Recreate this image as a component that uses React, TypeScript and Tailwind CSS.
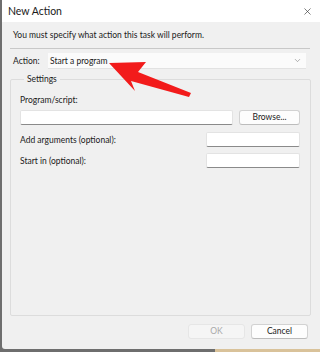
import { X, ChevronDown } from "lucide-react"

const font = { fontFamily: 'Lato, "Noto Sans", sans-serif' }

function Field({ className = "" }: { className?: string }) {
  return (
    <div className={"h-[15px] bg-white border border-[#e3e3e3] border-b-[#8a8a8a] rounded-[2px] " + className} />
  )
}

function Btn({ label, disabled, className = "" }: { label: string; disabled?: boolean; className?: string }) {
  return (
    <div
      className={
        "h-[15px] flex items-center justify-center rounded-[3px] border text-[8.5px] leading-none " +
        (disabled
          ? "bg-[#f5f5f5] border-[#e6e6e6] text-[#a9a9a9] "
          : "bg-[#fdfdfd] border-[#d2d2d2] border-b-[#bcbcbc] text-[#1b1b1b] ") +
        className
      }
    >
      {label}
    </div>
  )
}

export default function App() {
  return (
    <div className="relative w-[320px] h-[352px] bg-[#6e6e6e] flex flex-col overflow-hidden" style={font}>
      <div className="ml-[2px] h-[349px] shrink-0 flex flex-col bg-[#f0f0f0] rounded-bl-[3px]">
        {/* title bar */}
        <div className="h-[22px] shrink-0 bg-white flex items-center justify-between pl-[6px] pr-[7px]">
          <span className="text-[10.5px] leading-[12px] text-[#1a1a1a]">New Action</span>
          <X className="w-[11px] h-[11px] text-[#333]" strokeWidth={1.4} />
        </div>

        <div className="flex-1 flex flex-col px-[8px] text-[8.5px] leading-[12px] text-[#1a1a1a]">
          <div className="pt-[7px] pl-[3px]">You must specify what action this task will perform.</div>
          <div className="mt-[7px] h-px bg-[#c8c8c8] mr-[2px]" />

          {/* action row */}
          <div className="mt-[4px] flex items-center pl-[3px] pr-[6px]">
            <span className="w-[35px]">Action:</span>
            <div className="flex-1 h-[16px] bg-[#fbfbfb] border-b border-[#e2e2e2] flex items-center justify-between pl-[2px] pr-[4px]">
              <span>Start a program</span>
              <ChevronDown className="w-[9px] h-[9px] text-[#777]" strokeWidth={1.5} />
            </div>
          </div>

          {/* settings group */}
          <fieldset className="mt-[4px] mr-[1px] h-[243px] border border-[#dcdcdc] rounded-[2px] px-[9px] pb-[4px]">
            <legend className="ml-[4px] px-[3px]">Settings</legend>
            <div className="mt-[9px]">Program/script:</div>
            <div className="mt-[4px] flex items-center gap-[6px] pr-[1px]">
              <Field className="flex-1" />
              <Btn label="Browse..." className="w-[61px]" />
            </div>
            <div className="mt-[7px] flex items-center justify-between pr-[1px]">
              <span>Add arguments (optional):</span>
              <Field className="w-[94px]" />
            </div>
            <div className="mt-[6px] flex items-center justify-between pr-[1px]">
              <span>Start in (optional):</span>
              <Field className="w-[94px]" />
            </div>
          </fieldset>

          {/* buttons */}
          <div className="mt-[8px] flex justify-end gap-[6px] pr-[4px]">
            <Btn label="OK" disabled className="w-[57px]" />
            <Btn label="Cancel" className="w-[57px]" />
          </div>
        </div>
      </div>
      <div className="flex-1 flex">
        <div className="flex-1" />
        <div className="w-[105px] bg-[#d9c29a]" />
      </div>

      {/* red annotation arrow */}
      <svg className="absolute left-0 top-0 pointer-events-none" width="320" height="352" viewBox="0 0 320 352">
        <polygon
          points="109,63 146,62 138,72 191,93 189,97 131,81 135,91"
          fill="#f21b1b"
        />
      </svg>
    </div>
  )
}
